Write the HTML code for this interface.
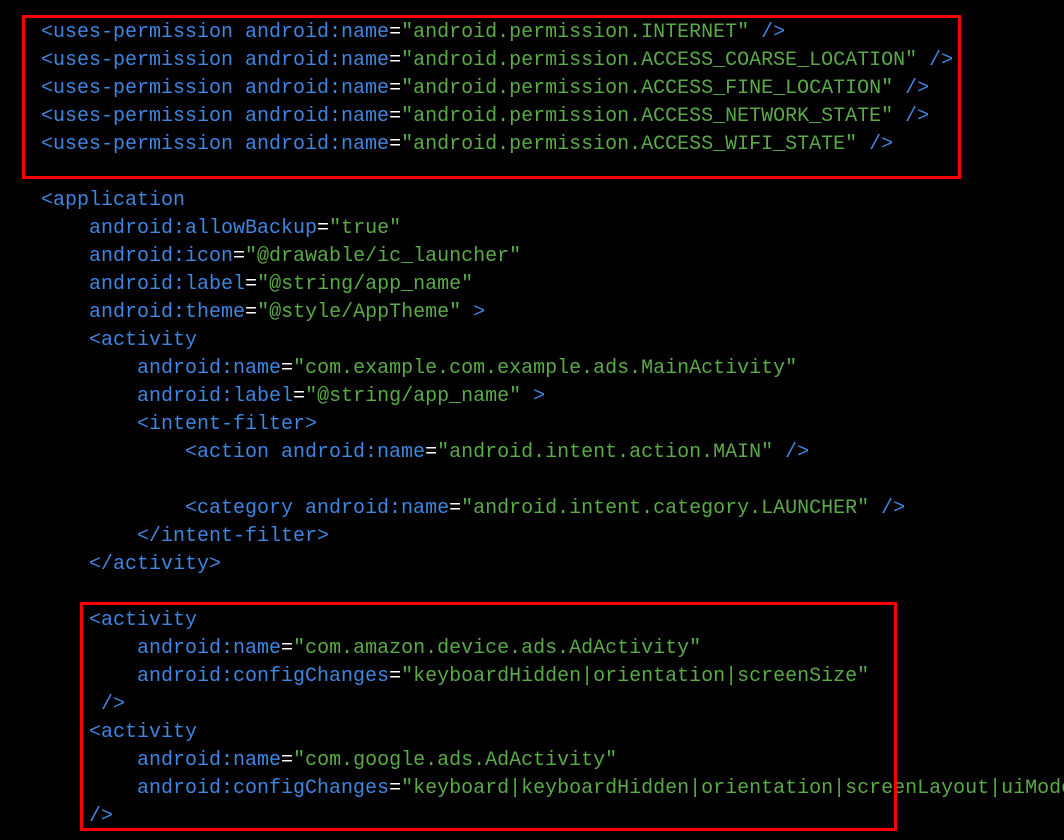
<!DOCTYPE html>
<html><head><meta charset="utf-8"><style>
html,body{margin:0;padding:0;background:#000;width:1064px;height:840px;overflow:hidden}
pre{position:absolute;left:41px;top:19px;margin:0;font-family:"Liberation Mono","DejaVu Sans Mono",monospace;font-size:20px;line-height:28px;color:#3f86e0;white-space:pre;width:1023px;overflow:hidden}
.g{color:#5aaa48}.w{color:#fff}
.box{position:absolute;border:3px solid #ff0000}
</style></head><body>
<pre>&lt;uses-permission android:name<span class="w">=</span><span class="g">"android.permission.INTERNET"</span> /&gt;
&lt;uses-permission android:name<span class="w">=</span><span class="g">"android.permission.ACCESS_COARSE_LOCATION"</span> /&gt;
&lt;uses-permission android:name<span class="w">=</span><span class="g">"android.permission.ACCESS_FINE_LOCATION"</span> /&gt;
&lt;uses-permission android:name<span class="w">=</span><span class="g">"android.permission.ACCESS_NETWORK_STATE"</span> /&gt;
&lt;uses-permission android:name<span class="w">=</span><span class="g">"android.permission.ACCESS_WIFI_STATE"</span> /&gt;

&lt;application
    android:allowBackup<span class="w">=</span><span class="g">"true"</span>
    android:icon<span class="w">=</span><span class="g">"@drawable/ic_launcher"</span>
    android:label<span class="w">=</span><span class="g">"@string/app_name"</span>
    android:theme<span class="w">=</span><span class="g">"@style/AppTheme"</span> &gt;
    &lt;activity
        android:name<span class="w">=</span><span class="g">"com.example.com.example.ads.MainActivity"</span>
        android:label<span class="w">=</span><span class="g">"@string/app_name"</span> &gt;
        &lt;intent-filter&gt;
            &lt;action android:name<span class="w">=</span><span class="g">"android.intent.action.MAIN"</span> /&gt;

            &lt;category android:name<span class="w">=</span><span class="g">"android.intent.category.LAUNCHER"</span> /&gt;
        &lt;/intent-filter&gt;
    &lt;/activity&gt;

    &lt;activity
        android:name<span class="w">=</span><span class="g">"com.amazon.device.ads.AdActivity"</span>
        android:configChanges<span class="w">=</span><span class="g">"keyboardHidden|orientation|screenSize"</span>
     /&gt;
    &lt;activity
        android:name<span class="w">=</span><span class="g">"com.google.ads.AdActivity"</span>
        android:configChanges<span class="w">=</span><span class="g">"keyboard|keyboardHidden|orientation|screenLayout|uiMode</span>
    /&gt;</pre>
<div class="box" style="left:22px;top:15px;width:933px;height:158px"></div>
<div class="box" style="left:80px;top:602px;width:811px;height:223px"></div>
</body></html>
